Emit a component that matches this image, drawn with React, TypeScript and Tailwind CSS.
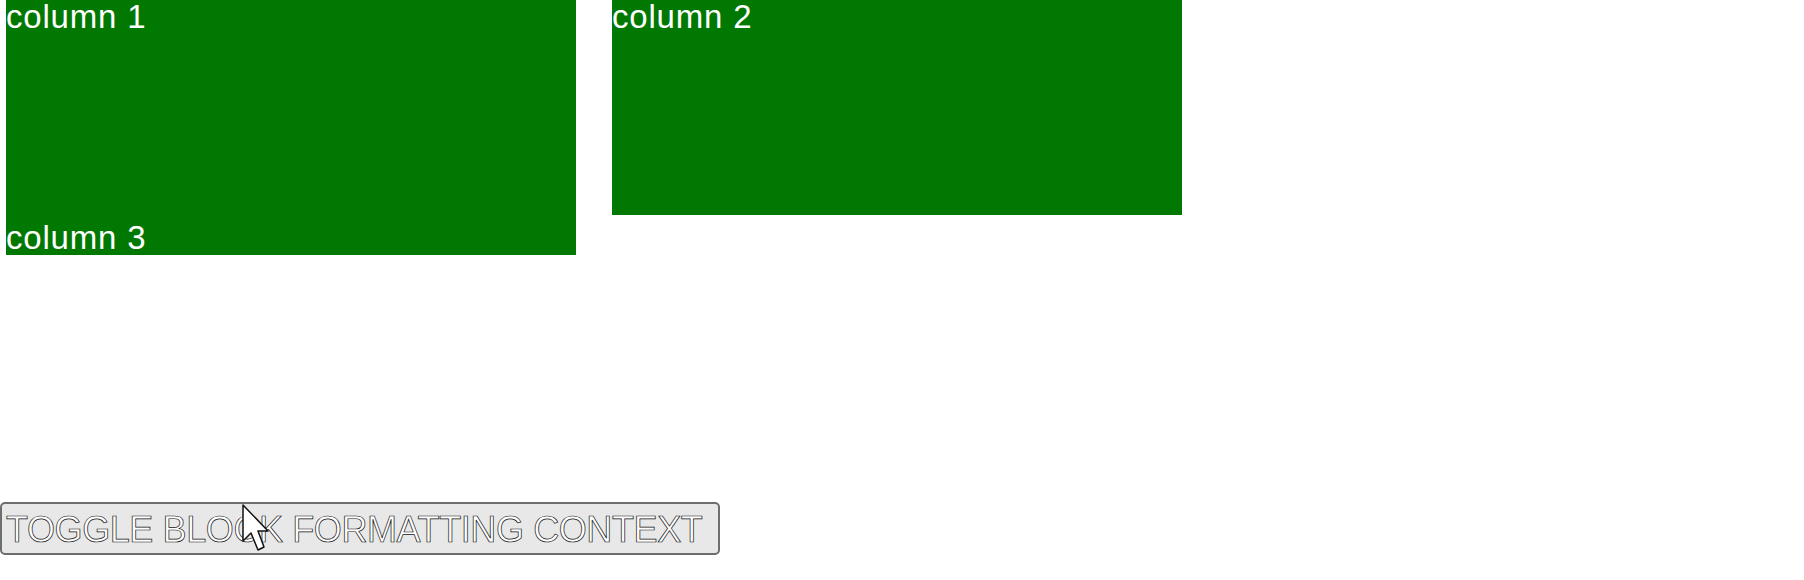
export default function App() {
  return (
    <div className="relative h-[580px] w-full bg-white font-['Liberation_Sans',Arial,sans-serif]">
      <div className="flex items-start pl-[6px]">
        <div className="flex h-[255px] w-[570px] flex-col justify-between bg-[#017801] text-[33px] leading-[34px] tracking-[0.8px] text-white">
          <div>column 1</div>
          <div>column 3</div>
        </div>
        <div className="ml-[36px] h-[215px] w-[570px] bg-[#017801] text-[33px] leading-[34px] tracking-[0.8px] text-white">
          column 2
        </div>
      </div>

      <div className="mt-[247px]">
        <button
          type="button"
          className="relative flex h-[53px] w-[720px] items-center rounded-[5px] border-2 border-[#6e6e6e] bg-[#e8e8e8] pl-[4px] pt-[2px] text-[36px] leading-none tracking-[-0.4px] text-white [-webkit-text-stroke:0.7px_#111]"
        >
          TOGGLE BLOCK FORMATTING CONTEXT
          {/* mouse pointer over the button */}
          <svg
            className="absolute left-[238px] top-[0px]"
            width="30"
            height="50"
            viewBox="0 0 30 50"
          >
            <path
              d="M3 1 L3 37 L11 29 L18 46 L24 43 L18 27 L28 27 Z"
              fill="#fff"
              stroke="#111"
              strokeWidth="1.5"
              strokeLinejoin="round"
            />
          </svg>
        </button>
      </div>
    </div>
  );
}
